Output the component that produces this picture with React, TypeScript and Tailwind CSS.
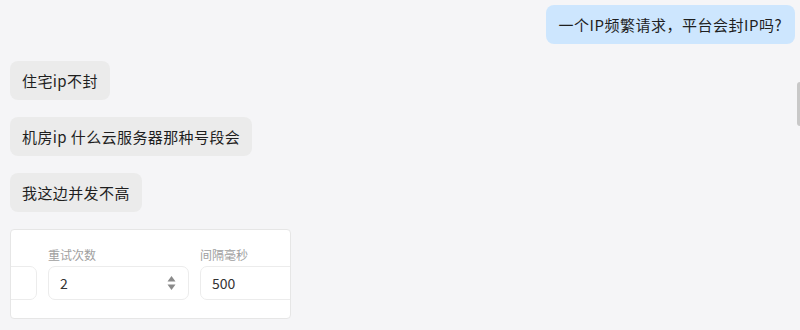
import React from "react";

const font = { fontFamily: '"Noto Sans CJK SC", "Noto Sans", sans-serif' };

const replies = ["住宅ip不封", "机房ip 什么云服务器那种号段会", "我这边并发不高"];

function Field({ label, value, spinner }: { label: string; value: string; spinner?: boolean }) {
  return (
    <div className="flex w-[141px] shrink-0 flex-col gap-[3px]">
      <span className="h-[16px] text-[12px] leading-[16px] text-[#a0a0a0]">{label}</span>
      <div className="flex h-[34px] items-center justify-between rounded-[7px] border border-[#ececec] bg-white pl-[11px] pr-[12px] text-[14px] text-[#333]">
        <span>{value}</span>
        {spinner && (
          <svg width="9" height="16" viewBox="0 0 9 16">
            <path d="M4.5 1 L8.5 6.5 H0.5 Z" fill="#8a8a8a" />
            <path d="M4.5 15 L8.5 9.5 H0.5 Z" fill="#8a8a8a" />
          </svg>
        )}
      </div>
    </div>
  );
}

export default function App() {
  return (
    <div className="relative h-[330px] w-[800px] overflow-hidden bg-[#f5f5f7]" style={font}>
      <div className="flex flex-col gap-[17px] pl-[10px] pr-[5px] pt-[5px]">
        <div className="flex justify-end">
          <div className="rounded-[8px] bg-[#cde6fe] px-[13px] py-[8px] text-[15px] leading-[23px] tracking-[0.5px] text-[#1f1f1f]">
            一个IP频繁请求，平台会封IP吗?
          </div>
        </div>
        {replies.map((t) => (
          <div key={t} className="flex">
            <div className="rounded-[8px] bg-[#ebebeb] px-[12px] py-[8px] text-[15px] leading-[23px] tracking-[0.4px] text-[#1f1f1f]">
              {t}
            </div>
          </div>
        ))}
        <div className="w-[281px] overflow-hidden rounded-[4px] border border-[#e6e6e6] bg-white pb-[18px] pt-[17px]">
          <div className="-ml-[115px] flex gap-[11px]">
            <Field label="" value="" />
            <Field label="重试次数" value="2" spinner />
            <Field label="间隔毫秒" value="500" />
          </div>
        </div>
      </div>
      <div className="absolute right-0 top-[82px] h-[44px] w-[3px] rounded-l bg-[#c8c8c8]" />
    </div>
  );
}
